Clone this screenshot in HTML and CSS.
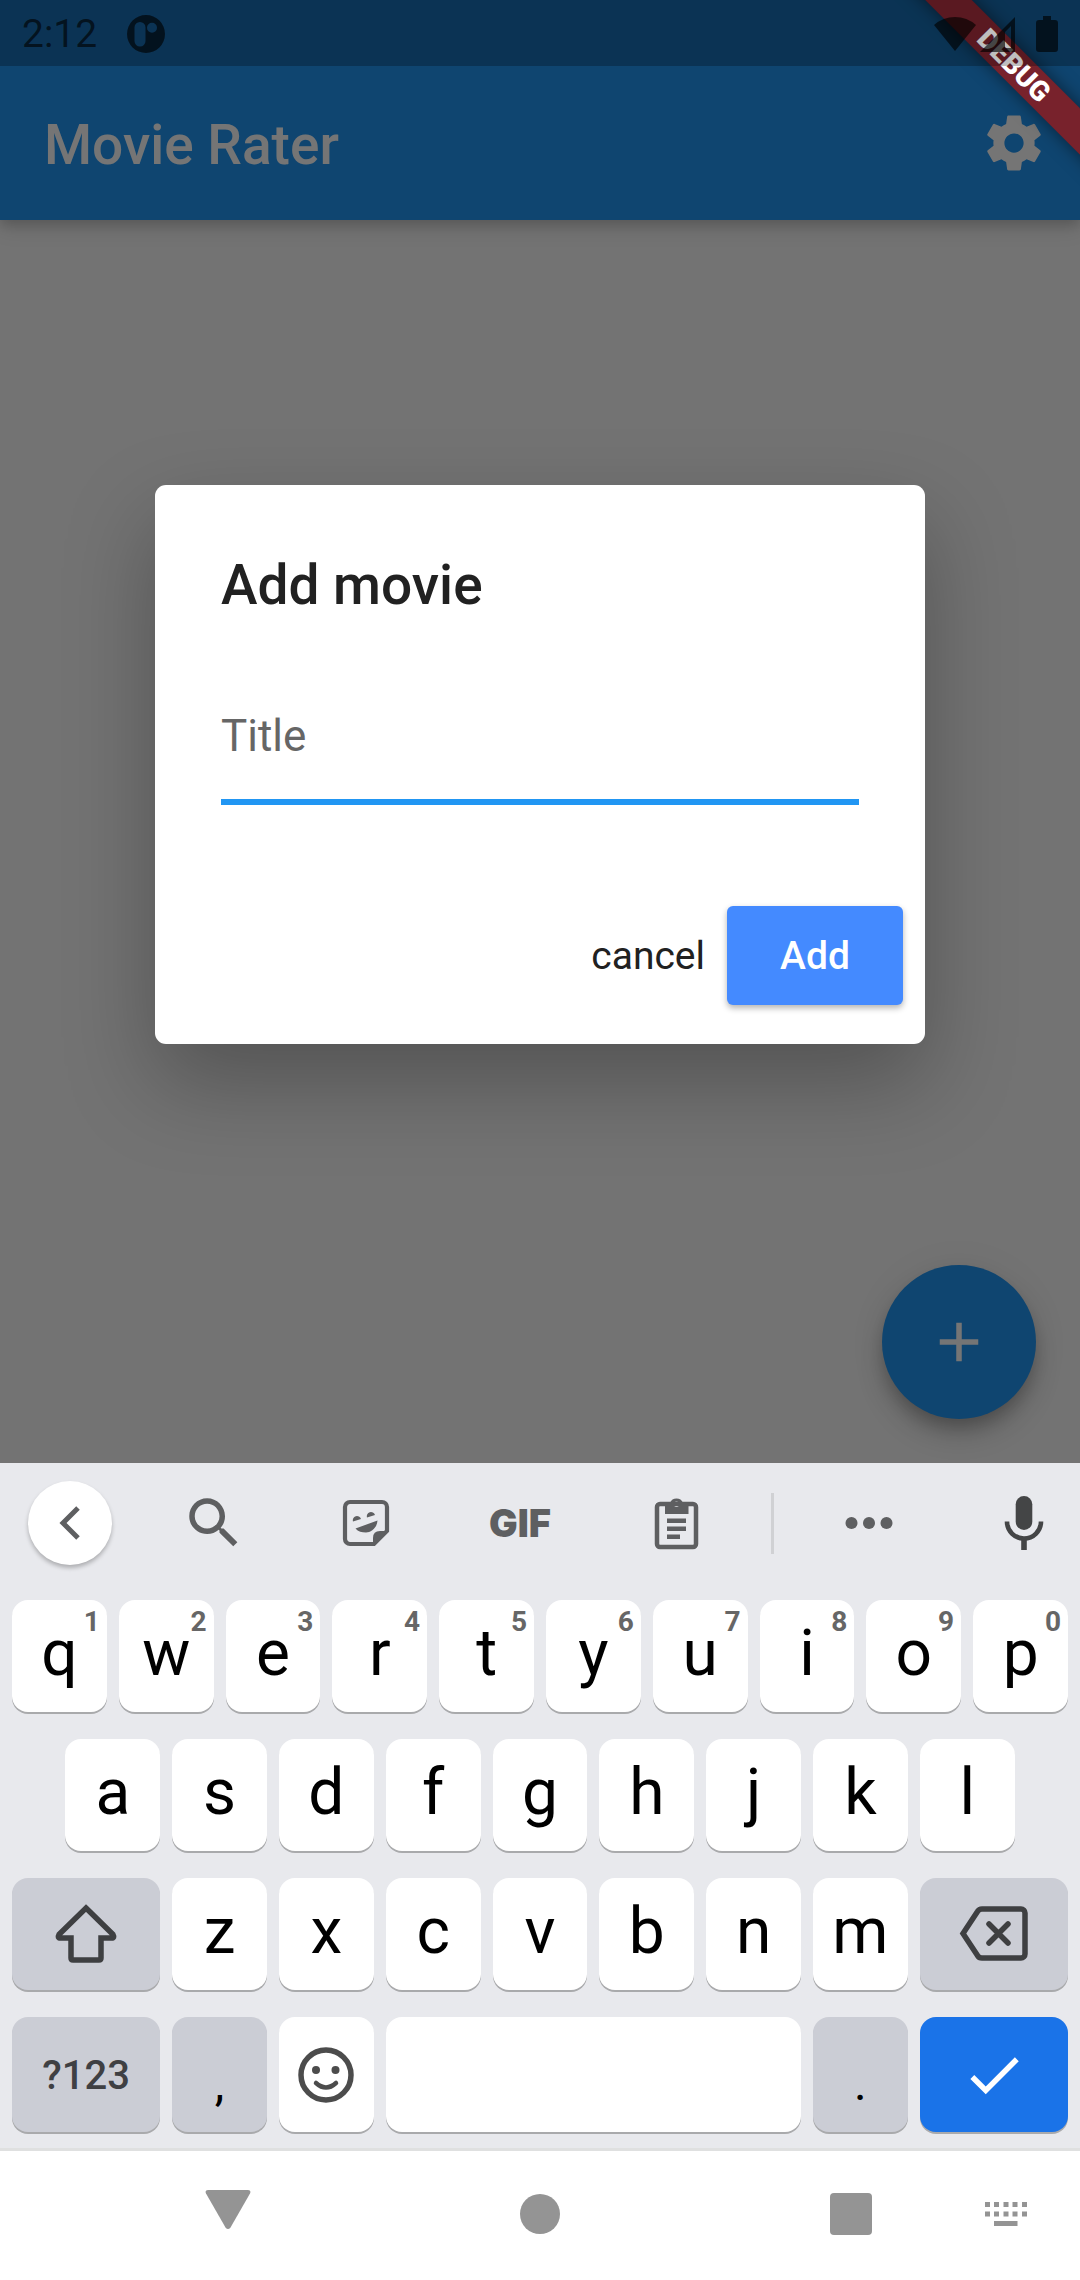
FILE: index.html
```html
<!DOCTYPE html>
<html lang="en">
<head>
<meta charset="utf-8">
<meta name="viewport" content="width=device-width, initial-scale=1">
<title>Movie Rater</title>
<link rel="stylesheet" href="styles.css">
</head>
<body>
<div class="app">
  <header class="app-bar">
    <h1 class="app-title">Movie Rater</h1>
    <button class="icon-button" type="button" aria-label="Settings">
      <svg width="66" height="66" viewBox="0 0 24 24" fill="currentColor"><path d="M19.43 12.98c.04-.32.07-.64.07-.98s-.03-.66-.07-.98l2.11-1.65c.19-.15.24-.42.12-.64l-2-3.46c-.12-.22-.39-.3-.61-.22l-2.49 1c-.52-.4-1.08-.73-1.69-.98l-.38-2.65C14.46 2.18 14.25 2 14 2h-4c-.25 0-.46.18-.49.42l-.38 2.65c-.61.25-1.17.59-1.69.98l-2.49-1c-.23-.09-.49 0-.61.22l-2 3.46c-.13.22-.07.49.12.64l2.11 1.65c-.04.32-.07.65-.07.98s.03.66.07.98l-2.11 1.65c-.19.15-.24.42-.12.64l2 3.46c.12.22.39.3.61.22l2.49-1c.52.4 1.08.73 1.69.98l.38 2.65c.03.24.24.42.49.42h4c.25 0 .46-.18.49-.42l.38-2.65c.61-.25 1.17-.59 1.69-.98l2.49 1c.23.09.49 0 .61-.22l2-3.46c.12-.22.07-.49-.12-.64l-2.11-1.65zM12 15.5c-1.93 0-3.5-1.57-3.5-3.5s1.57-3.5 3.5-3.5 3.5 1.57 3.5 3.5-1.57 3.5-3.5 3.5z"/></svg>
    </button>
  </header>
  <button class="fab" type="button" aria-label="Add movie">
    <svg width="66" height="66" viewBox="0 0 24 24" fill="currentColor"><path d="M19 13h-6v6h-2v-6H5v-2h6V5h2v6h6v2z"/></svg>
  </button>

  <div class="scrim">
    <form class="dialog" role="dialog" aria-labelledby="dialog-title">
      <h2 class="dialog-title" id="dialog-title">Add movie</h2>
      <input class="dialog-input" type="text" placeholder="Title" aria-label="Title">
      <div class="dialog-actions">
        <button class="text-button" type="button">cancel</button>
        <button class="raised-button" type="button">Add</button>
      </div>
    </form>
  </div>

  <div class="banner-corner"><div class="banner">DEBUG</div></div>

  <div class="status-bar">
    <span class="clock">2:12</span>
    <svg class="notification" width="38" height="38" viewBox="0 0 38 38" fill="currentColor"><path fill-rule="evenodd" d="M19 0a19 19 0 1 1 0 38a19 19 0 1 1 0-38zM13 7a5.500 5.500 0 0 0-5.500 5.500v13.500a5.500 5.500 0 0 0 11 0v-13.500a5.500 5.500 0 0 0-5.500-5.500zM25 7.700a5 5 0 1 0 0 10a5 5 0 1 0 0-10z"/></svg>
    <div class="status-icons">
      <svg width="42" height="36" viewBox="0 0 42 36" fill="currentColor"><path d="M21 35L0 9Q9 1 21 1T42 9z"/></svg>
      <svg width="36" height="36" viewBox="0 0 36 36" fill="currentColor"><path fill-rule="evenodd" d="M0 36L35 1V36zM25 16V32H31V10z"/></svg>
      <svg class="battery" width="22" height="36" viewBox="0 0 22 36" fill="currentColor"><path d="M7 0h8v4h4q3 0 3 3v26q0 3-3 3H3q-3 0-3-3V7q0-3 3-3h4z"/></svg>
    </div>
  </div>
</div>

<div class="keyboard">
  <div class="tools">
    <button class="tool tool-back" type="button" aria-label="Back">
      <svg width="24" height="34" viewBox="0 0 24 34" fill="none" stroke="currentColor" stroke-width="5"><path d="M20 2L5 17L20 32"/></svg>
    </button>
    <button class="tool" type="button" aria-label="Search">
      <svg width="66" height="66" viewBox="0 0 24 24" fill="currentColor"><path d="M15.500 14h-.79l-.28-.27C15.410 12.590 16 11.110 16 9.500 16 5.910 13.090 3 9.500 3S3 5.910 3 9.500 5.910 16 9.500 16c1.610 0 3.090-.59 4.230-1.570l.27.28v.79l5 4.990L20.490 19l-4.990-5zm-6 0C7.010 14 5 11.990 5 9.500S7.010 5 9.500 5 14 7.010 14 9.500 11.990 14 9.500 14z"/></svg>
    </button>
    <button class="tool" type="button" aria-label="Stickers">
      <svg width="48" height="48" viewBox="0 0 48 48" fill="currentColor"><path fill="none" stroke="currentColor" stroke-width="4.200" d="M32 45H8a5 5 0 0 1-5-5V8a5 5 0 0 1 5-5H40a5 5 0 0 1 5 5V32z"/><path d="M31 46V39q0-7 7-7H46z"/><path d="M13.500 29.500L35.500 21.500C35 29 29 33.500 24 33.500C20 33.500 16 32.500 13.500 29.500zM11 22.500a4 4 0 1 1 8-2.500zM25 18.500a4 4 0 1 1 8-2.500z"/></svg>
    </button>
    <button class="tool tool-gif" type="button">GIF</button>
    <button class="tool" type="button" aria-label="Clipboard">
      <svg width="48" height="54" viewBox="0 0 48 54" fill="currentColor"><rect x="5" y="8" width="39" height="43" rx="3" fill="none" stroke="currentColor" stroke-width="4.500"/><path fill-rule="evenodd" d="M13 7h5a7 7 0 0 1 13 0h5.500v11H13zM24.500 5.500a2.700 2.700 0 1 0 0 5.400a2.700 2.700 0 1 0 0-5.400z"/><path d="M15 22.500h19v4.500H15zM15 30.500h19v4.500H15zM15 38.500h13v4.500H15z"/></svg>
    </button>
    <span class="tool-divider"></span>
    <button class="tool" type="button" aria-label="More">
      <svg width="48" height="12" viewBox="0 0 48 12" fill="currentColor"><circle cx="6.500" cy="6" r="6"/><circle cx="24" cy="6" r="6"/><circle cx="41.500" cy="6" r="6"/></svg>
    </button>
    <button class="tool tool-mic" type="button" aria-label="Voice input">
      <svg width="42" height="54" viewBox="0 0 42 54" fill="currentColor"><rect x="12.700" y="0" width="16.600" height="34" rx="8.300"/><path fill="none" stroke="currentColor" stroke-width="4.600" d="M4 25.500a17 17 0 0 0 34 0"/><path d="M18.200 42h5.600v12h-5.600z"/></svg>
    </button>
  </div>

  <div class="keys">
    <button class="key" type="button">q<span class="hint">1</span></button>
    <button class="key" type="button">w<span class="hint">2</span></button>
    <button class="key" type="button">e<span class="hint">3</span></button>
    <button class="key" type="button">r<span class="hint">4</span></button>
    <button class="key" type="button">t<span class="hint">5</span></button>
    <button class="key" type="button">y<span class="hint">6</span></button>
    <button class="key" type="button">u<span class="hint">7</span></button>
    <button class="key" type="button">i<span class="hint">8</span></button>
    <button class="key" type="button">o<span class="hint">9</span></button>
    <button class="key" type="button">p<span class="hint">0</span></button>

    <button class="key key-inset" type="button">a</button>
    <button class="key" type="button">s</button>
    <button class="key" type="button">d</button>
    <button class="key" type="button">f</button>
    <button class="key" type="button">g</button>
    <button class="key" type="button">h</button>
    <button class="key" type="button">j</button>
    <button class="key" type="button">k</button>
    <button class="key" type="button">l</button>

    <button class="key key-wide key-dark key-icon key-row-start" type="button" aria-label="Shift">
      <svg width="64" height="62" viewBox="0 0 64 62" fill="none" stroke="currentColor" stroke-width="5.500"><path d="M32 5L59 31.500q2 3.500-1.500 3.500H47V55q0 2-2 2H19q-2 0-2-2V35H6.500q-3.500 0-1.500-3.500z"/></svg>
    </button>
    <button class="key" type="button">z</button>
    <button class="key" type="button">x</button>
    <button class="key" type="button">c</button>
    <button class="key" type="button">v</button>
    <button class="key" type="button">b</button>
    <button class="key" type="button">n</button>
    <button class="key" type="button">m</button>
    <button class="key key-wide key-dark key-icon" type="button" aria-label="Backspace">
      <svg width="72" height="58" viewBox="0 0 72 58" fill="none" stroke="currentColor" stroke-width="5.500"><path d="M24 4H63a4 4 0 0 1 4 4V49a4 4 0 0 1-4 4H24q-3 0-4.500-2.500L5 28.500L19.500 6.500Q21 4 24 4z"/><path stroke-linecap="round" d="M31 19L50 38M50 19L31 38"/></svg>
    </button>

    <button class="key key-wide key-dark key-symbols" type="button">?123</button>
    <button class="key key-dark key-punct" type="button">,</button>
    <button class="key key-icon key-emoji" type="button" aria-label="Emoji">
      <svg width="56" height="56" viewBox="0 0 56 56" fill="currentColor"><circle cx="28" cy="28" r="25" fill="none" stroke="currentColor" stroke-width="5.500"/><circle cx="18" cy="23" r="4"/><circle cx="37.500" cy="23" r="4"/><path fill="none" stroke="currentColor" stroke-width="4.500" stroke-linecap="round" d="M18 36q10 9 20 0"/></svg>
    </button>
    <button class="key key-space" type="button" aria-label="Space"></button>
    <button class="key key-dark key-punct" type="button">.</button>
    <button class="key key-wide key-done key-icon" type="button" aria-label="Done">
      <svg width="66" height="66" viewBox="0 0 24 24" fill="currentColor"><path d="M9 16.170L4.830 12l-1.420 1.410L9 19 21 7l-1.410-1.410z"/></svg>
    </button>
  </div>
</div>

<nav class="system-nav" aria-label="System">
  <button class="nav-button nav-back" type="button" aria-label="Back">
    <svg width="46" height="48" viewBox="0 0 46 48" fill="currentColor"><path d="M3 0H43q3.500 0 2 3.500L25.500 37.500q-2.500 3-5 0L1 3.500Q-.5 0 3 0z"/></svg>
  </button>
  <button class="nav-button nav-home" type="button" aria-label="Home">
    <svg width="40" height="40" viewBox="0 0 40 40" fill="currentColor"><circle cx="20" cy="20" r="20"/></svg>
  </button>
  <button class="nav-button nav-recent" type="button" aria-label="Recent apps">
    <svg width="42" height="42" viewBox="0 0 42 42" fill="currentColor"><rect width="42" height="42" rx="4"/></svg>
  </button>
  <button class="nav-button nav-keyboard" type="button" aria-label="Switch keyboard">
    <svg width="42" height="24" viewBox="0 0 42 24" fill="currentColor"><path d="M0 0h5v5h-5zM9 0h5v5h-5zM18.500 0h5v5h-5zM27.500 0h5v5h-5zM37 0h5v5h-5zM0 9.500h5v5h-5zM9 9.500h5v5h-5zM18.500 9.500h5v5h-5zM27.500 9.500h5v5h-5zM37 9.500h5v5h-5zM9 19h23.500v5H9z"/></svg>
  </button>
</nav>
</body>
</html>
```

FILE: styles.css
```css
* {
  box-sizing: border-box;
}

body {
  margin: 0;
  min-height: 100vh;
  display: flex;
  flex-direction: column;
  font-family: Roboto, "Liberation Sans", sans-serif;
  background: #fff;
}

button,
input {
  margin: 0;
  padding: 0;
  border: 0;
  background: none;
  color: inherit;
  font: inherit;
}

svg {
  display: block;
  flex: none;
}

/* App */

.app {
  position: relative;
  flex: 1;
  display: flex;
  flex-direction: column;
  justify-content: space-between;
  background: #fafafa;
  overflow: hidden;
}

.app-bar {
  display: flex;
  align-items: center;
  justify-content: space-between;
  height: 220px;
  padding: 66px 0 0 44px;
  background: #2196f3;
  color: #fff;
  box-shadow: 0 5px 11px rgba(0, 0, 0, 0.14), 0 8px 20px rgba(0, 0, 0, 0.12);
}

.app-title {
  margin: 0;
  padding-top: 3px;
  font-size: 55px;
  font-weight: 500;
  line-height: 68px;
}

.icon-button {
  width: 132px;
  height: 132px;
  display: grid;
  place-items: center;
}

.fab {
  align-self: flex-end;
  width: 154px;
  height: 154px;
  margin: 44px;
  display: grid;
  place-items: center;
  border-radius: 50%;
  background: #2196f3;
  color: #fff;
  box-shadow: 0 10px 16px -3px rgba(0, 0, 0, 0.2), 0 16px 28px rgba(0, 0, 0, 0.16), 0 3px 40px rgba(0, 0, 0, 0.06);
}

/* Dialog */

.scrim {
  position: absolute;
  inset: 0;
  display: flex;
  align-items: center;
  justify-content: center;
  padding: 66px 110px 0;
  background: rgba(0, 0, 0, 0.54);
}

.dialog {
  width: 100%;
  max-width: 770px;
  padding: 66px 0 39px;
  border-radius: 11px;
  background: #fff;
  color: #212121;
  box-shadow: 0 38px 90px rgba(0, 0, 0, 0.28);
}

.dialog-title {
  margin: 0 66px 54px;
  font-size: 55px;
  font-weight: 500;
  line-height: 68px;
}

.dialog-input {
  display: block;
  width: calc(100% - 132px);
  height: 132px;
  margin: 0 66px 101px;
  border-bottom: 6px solid #2196f3;
  border-radius: 0;
  outline: none;
  font-size: 44px;
}

.dialog-input::placeholder {
  color: #666;
  opacity: 1;
}

.dialog-actions {
  display: flex;
  align-items: center;
  justify-content: flex-end;
  gap: 22px;
  padding: 0 22px;
  font-size: 39px;
}

.raised-button {
  width: 176px;
  height: 99px;
  border-radius: 6px;
  background: #448aff;
  color: #fff;
  font-weight: 500;
  box-shadow: 0 3px 6px rgba(0, 0, 0, 0.3);
}

/* Overlays on top of the app */

.banner-corner {
  position: absolute;
  top: 0;
  right: 0;
  width: 200px;
  height: 200px;
  overflow: hidden;
}

.banner {
  position: absolute;
  top: 49px;
  left: -16px;
  width: 300px;
  height: 33px;
  transform: rotate(45deg);
  background: #78222c;
  color: #fff;
  font-size: 28px;
  font-weight: 900;
  line-height: 33px;
  text-align: center;
  box-shadow: 0 0 17px rgba(0, 0, 0, 0.5);
}

.status-bar {
  position: absolute;
  top: 0;
  left: 0;
  right: 0;
  height: 66px;
  display: flex;
  align-items: center;
  padding: 2px 22px 0;
  background: rgba(0, 0, 0, 0.25);
  color: rgba(0, 0, 0, 0.64);
}

.clock {
  font-size: 39px;
}

.notification {
  margin-left: 30px;
}

.status-icons {
  display: flex;
  align-items: center;
  gap: 4px;
  margin-left: auto;
}

.battery {
  margin-left: 16px;
}

/* Keyboard */

.keyboard {
  background: #e8e9ed;
  border-bottom: 3px solid #dfe0e0;
}

.tools {
  display: grid;
  grid-template-columns: 139fr 150fr 154fr 154fr 158fr 34fr 160fr 131fr;
  place-items: center;
  height: 120px;
  color: #5e5f61;
}

.tool {
  display: grid;
  place-items: center;
  height: 84px;
}

.tool-back {
  width: 84px;
  border-radius: 50%;
  background: #fff;
  box-shadow: 0 3px 4px rgba(0, 0, 0, 0.25);
}

.tool-gif {
  font-family: Inter, Roboto, sans-serif;
  font-size: 38px;
  font-weight: 900;
}

.tool-mic {
  padding-left: 18px;
  color: #444546;
}

.tool-divider {
  width: 3px;
  height: 61px;
  background: #d0d1d4;
}

.keys {
  display: grid;
  grid-template-columns: repeat(20, 1fr);
  grid-template-rows: 112px 112px 112px 115px;
  gap: 27px 12px;
  padding: 17px 12px 16px;
}

.key {
  position: relative;
  grid-column: span 2;
  min-width: 0;
  padding-bottom: 5px;
  border-radius: 16px;
  background: #fff;
  color: #000;
  font-size: 64px;
  line-height: 1;
  text-align: center;
  box-shadow: 0 2px 0 #a9aaac;
}

.hint {
  position: absolute;
  top: 8px;
  right: 7px;
  color: #666;
  font-size: 28px;
  font-weight: 700;
}

.key-inset {
  grid-column: 2 / span 2;
}

.key-wide {
  grid-column: span 3;
}

.key-row-start {
  grid-column: 1 / span 3;
}

.key-space {
  grid-column: span 8;
}

.key-dark {
  background: #cbcdd5;
}

.key-icon {
  display: grid;
  place-items: center;
  padding: 0;
  color: #3e3f41;
}

.key-emoji {
  color: #4c4c4c;
}

.key-symbols {
  padding: 3px 0 0;
  color: #3f4043;
  font-size: 40px;
  font-weight: 500;
}

.key-punct {
  padding: 18px 0 0;
  font-size: 48px;
}

.key-done {
  background: #1a73e8;
  color: #fff;
}

/* System navigation */

.system-nav {
  display: grid;
  grid-template-columns: 148fr 160fr 152fr 160fr 151fr 160fr 149fr;
  align-items: center;
  height: 129px;
  padding-bottom: 3px;
  color: #949494;
}

.nav-button {
  display: grid;
  place-items: center;
  height: 96px;
}

.nav-back {
  grid-column: 2;
}

.nav-home {
  grid-column: 4;
}

.nav-recent {
  grid-column: 6;
}

.nav-keyboard {
  grid-column: 7;
}
```
